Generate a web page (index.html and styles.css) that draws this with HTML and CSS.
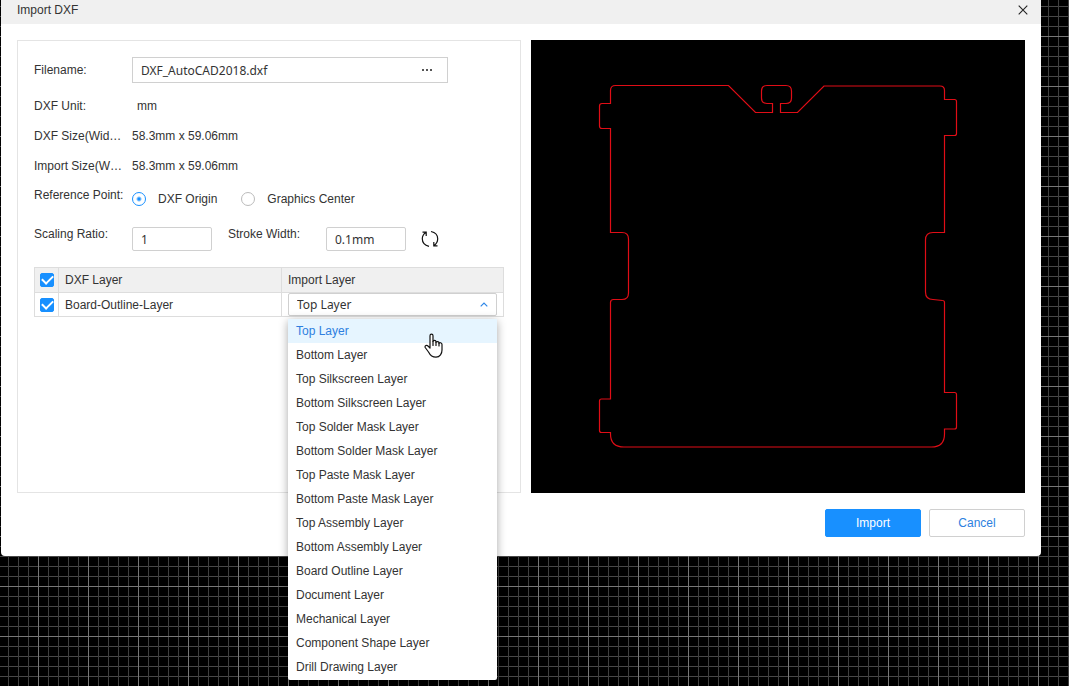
FILE: index.html
```html
<!DOCTYPE html>
<html lang="en">
<head>
<meta charset="utf-8">
<meta name="viewport" content="width=device-width, initial-scale=1">
<title>Import DXF</title>
<link rel="stylesheet" href="styles.css">
</head>
<body>
<main class="dialog" role="dialog" aria-labelledby="dialog-title">
  <header class="dialog-header">
    <h1 class="dialog-title" id="dialog-title">Import DXF</h1>
    <button class="close" type="button" aria-label="Close">
      <svg width="10" height="10" viewBox="0 0 10 10" fill="none" stroke="#222" stroke-width="1.1"><path d="M0.7 0.7 9.3 9.3M9.3 0.7 0.7 9.3"/></svg>
    </button>
  </header>

  <div class="dialog-body">
    <form class="settings" id="import-form">
      <div class="row row-file">
        <label class="label" for="filename">Filename:</label>
        <div class="file-box">
          <input class="file-input" id="filename" type="text" value="DXF_AutoCAD2018.dxf">
          <button class="browse" type="button" aria-label="Browse">
            <svg width="12" height="2" viewBox="0 0 12 2" fill="#555"><rect x="1" width="2" height="2"/><rect x="5" width="2" height="2"/><rect x="9" width="2" height="2"/></svg>
          </button>
        </div>
      </div>
      <div class="row row-info"><span class="label">DXF Unit:</span><span class="unit">mm</span></div>
      <div class="row row-info"><span class="label">DXF Size(Wid…</span><span>58.3mm x 59.06mm</span></div>
      <div class="row row-info"><span class="label">Import Size(W…</span><span>58.3mm x 59.06mm</span></div>
      <div class="row row-reference" role="radiogroup" aria-labelledby="reference-label">
        <span class="label label-top" id="reference-label">Reference Point:</span>
        <div class="controls">
          <label class="choice"><input class="radio" type="radio" name="reference" checked>DXF Origin</label>
          <label class="choice"><input class="radio" type="radio" name="reference">Graphics Center</label>
        </div>
      </div>
      <div class="row row-scale">
        <label class="label label-top" for="ratio">Scaling Ratio:</label>
        <div class="controls"><input class="number" id="ratio" type="text" value="1"></div>
        <label class="label label-top label-second" for="stroke">Stroke Width:</label>
        <div class="controls">
          <input class="number" id="stroke" type="text" value="0.1mm">
          <button class="refresh" type="button" aria-label="Refresh">
            <svg width="18" height="18" viewBox="0 0 18 18" fill="none" stroke="#111" stroke-width="1.2"><path d="M8 16.300C3.800 15.300 1.300 12.400 1.300 8.800 1.300 6 2.700 3.700 4.900 2.400M1.500 2.200H5.200V6M10 1.500C14.200 2.400 16.700 5.300 16.700 8.800 16.700 11.700 15.300 14 13.100 15.400M16.500 15.800H12.800V12"/></svg>
          </button>
        </div>
      </div>

      <table class="layers">
        <thead>
          <tr>
            <th class="cell-check"><input class="check" type="checkbox" aria-label="Select all layers" checked></th>
            <th class="cell-name">DXF Layer</th>
            <th>Import Layer</th>
          </tr>
        </thead>
        <tbody>
          <tr>
            <td class="cell-check"><input class="check" type="checkbox" aria-label="Board-Outline-Layer" checked></td>
            <td class="cell-name">Board-Outline-Layer</td>
            <td class="cell-select">
              <div class="picker">
                <select class="select" aria-label="Import Layer"><option>Top Layer</option></select>
                <svg class="chevron" width="8" height="5" viewBox="0 0 8 5" fill="none" stroke="#2d86e8" stroke-width="1.2"><path d="M0.700 4.300 4 1 7.300 4.300"/></svg>
                <ul class="menu" role="listbox" aria-label="Import Layer">
                  <li class="option option-active" role="option" aria-selected="true">Top Layer
                    <svg class="pointer" width="20" height="26" viewBox="0 0 20 26" fill="#fff" stroke="#111" stroke-width="1.200" stroke-linejoin="round" stroke-linecap="round"><path d="M6 15V2.700C6 .7 9 .7 9 2.700V8.500C9 7 12 7 12 8.800V9.500C12 8.200 15 8.200 15 10V10.500C15 9.300 18 9.300 18 11.500V17C18 20.500 16 24.200 12 24.200 7.500 24.200 6 22 4.500 19L1.200 14.500C.5 12.700 2.700 11.500 4 13Z"/><path d="M9 8.500V12.500M12 9.500V12.500M15 10.500V13" fill="none"/></svg>
                  </li>
                  <li class="option" role="option">Bottom Layer</li>
                  <li class="option" role="option">Top Silkscreen Layer</li>
                  <li class="option" role="option">Bottom Silkscreen Layer</li>
                  <li class="option" role="option">Top Solder Mask Layer</li>
                  <li class="option" role="option">Bottom Solder Mask Layer</li>
                  <li class="option" role="option">Top Paste Mask Layer</li>
                  <li class="option" role="option">Bottom Paste Mask Layer</li>
                  <li class="option" role="option">Top Assembly Layer</li>
                  <li class="option" role="option">Bottom Assembly Layer</li>
                  <li class="option" role="option">Board Outline Layer</li>
                  <li class="option" role="option">Document Layer</li>
                  <li class="option" role="option">Mechanical Layer</li>
                  <li class="option" role="option">Component Shape Layer</li>
                  <li class="option" role="option">Drill Drawing Layer</li>
                </ul>
              </div>
            </td>
          </tr>
        </tbody>
      </table>
    </form>

    <svg class="preview" viewBox="531 40 494 453" role="img" aria-label="Board outline preview">
      <path class="outline" d="M615.500 85.500H728.500L755.500 112.500H772.500V103.500H767Q761.500 103.500 761.500 98V91Q761.500 85.500 767 85.500H786Q791.500 85.500 791.500 91V98Q791.500 103.500 786 103.500H780.500V112.500H797.500L824 86H940Q944.500 86 944.500 90.500V99.500H954.500Q956.500 99.500 956.500 101.500V133.500Q956.500 135.500 954.500 135.500H944.500V232.500H933Q925.500 232.500 925.500 240V292Q925.500 299.500 933 299.500L942.500 300.500Q944.500 300.500 944.500 302.500V392.500H954.500Q956.500 392.500 956.500 394.500V427Q956.500 429 954.500 429H944.500V434Q944.500 447 931.500 447H624Q610.500 447 610.500 434V432.500H601.500Q599.500 432.500 599.500 430.500V401Q599.500 399 601.500 399H610.500V302.500Q610.500 299.500 613.500 299.500H622Q628.500 299.500 628.500 293V239Q628.500 232.500 622 232.500H610.500V128.500H602Q599.500 128.500 599.500 126V106Q599.500 103.500 602 103.500H610.500V90.500Q610.500 85.500 615.500 85.500Z"/>
    </svg>
  </div>

  <footer class="dialog-footer">
    <button class="button button-primary" type="submit" form="import-form">Import</button>
    <button class="button" type="button">Cancel</button>
  </footer>
</main>
</body>
</html>
```
FILE: styles.css
```css
* {
  box-sizing: border-box;
}

body {
  margin: 0;
  min-height: 100vh;
  color: #333;
  font: 12px/24px "Liberation Sans", Arial, sans-serif;
  background-color: #000;
  background-image:
    linear-gradient(90deg, #777 1px, transparent 1px),
    linear-gradient(#777 1px, transparent 1px),
    linear-gradient(90deg, #404040 1px, transparent 1px),
    linear-gradient(#484848 1px, transparent 1px);
  background-size: 50px 50px, 50px 50px, 10px 10px, 10px 10px;
  background-position: 38px 0, 0 36px, 8px 0, 0 6px;
}

button,
input,
select {
  margin: 0;
  color: inherit;
  font: inherit;
}

button {
  padding: 0;
  border: 0;
  background: none;
}

svg {
  display: block;
}

.dialog {
  margin: 0 28px 0 1px;
  border-radius: 0 0 4px 4px;
  background: #fff;
}

.dialog-header {
  display: flex;
  justify-content: space-between;
  height: 24px;
  padding: 0 13px 4px 16px;
  background: #f0f0f0;
}

.dialog-title {
  margin: 0;
  font-size: 12px;
  font-weight: 400;
  line-height: 20px;
}

.close {
  display: grid;
  place-items: center;
  width: 10px;
  height: 20px;
}

.dialog-body {
  display: grid;
  grid-template-columns: 504fr 494fr;
  gap: 10px;
  padding: 16px 16px 0;
}

.settings {
  padding: 16px;
  border: 1px solid #e4e4e4;
}

.row {
  display: flex;
  align-items: center;
}

.row-file {
  margin-bottom: 8px;
}

.row-info {
  height: 30px;
}

.row-reference {
  align-items: flex-start;
}

.row-scale {
  align-items: flex-start;
  margin: 3px 0 9px;
}

.label {
  flex: none;
  width: 98px;
  white-space: nowrap;
}

.label-top {
  line-height: 28px;
}

.label-second {
  margin-left: 16px;
}

.unit {
  padding-left: 5px;
}

.file-box {
  display: flex;
  width: 316px;
  height: 26px;
  border: 1px solid #d0d0d0;
}

.file-input {
  flex: 1;
  min-width: 0;
  padding: 2px 8px 0;
  border: 0;
  outline: 0;
  background: none;
  font-family: "Noto Sans", sans-serif;
}

.browse {
  display: grid;
  place-items: center;
  width: 40px;
}

.controls {
  display: flex;
  align-items: center;
  height: 36px;
}

.row-scale .controls {
  height: 38px;
}

.choice {
  display: flex;
  align-items: center;
  gap: 12px;
  margin-right: 24px;
}

.radio {
  appearance: none;
  width: 14px;
  height: 14px;
  border: 1px solid #bbb;
  border-radius: 50%;
}

.radio:checked {
  border-color: #1890ff;
  background: radial-gradient(circle, #1890ff 1px, transparent 3px);
}

.number {
  width: 80px;
  height: 24px;
  padding: 1px 8px 0;
  border: 1px solid #d0d0d0;
  border-radius: 2px;
  outline: 0;
  font-family: "Noto Sans", sans-serif;
}

.refresh {
  margin-left: 15px;
}

.layers {
  width: 100%;
  border-collapse: collapse;
  table-layout: fixed;
}

.layers th,
.layers td {
  height: 25px;
  padding: 0 6px;
  border: 1px solid #ddd;
  font-weight: 400;
  text-align: left;
}

.layers th {
  background: #f0f0f0;
}

.layers .cell-check {
  width: 24px;
  padding: 0 5px;
}

.layers .cell-name {
  width: 223px;
}

.layers td {
  height: 24px;
  line-height: 22px;
}

.check {
  appearance: none;
  display: grid;
  place-items: center;
  width: 14px;
  height: 14px;
  border: 1px solid #bbb;
  border-radius: 2px;
}

.check:checked {
  border-color: #1890ff;
  background: #1890ff;
}

.check:checked::before {
  content: "";
  width: 9px;
  height: 5px;
  margin-bottom: 3px;
  border: solid #fff;
  border-width: 0 0 2px 2px;
  transform: rotate(-45deg);
}

.picker {
  position: relative;
}

.select {
  display: block;
  appearance: none;
  width: 100%;
  height: 23px;
  padding: 0 8px;
  border: 1px solid #d0d0d0;
  border-radius: 2px;
  outline: 0;
  background: #fff;
  font-family: "Noto Sans", sans-serif;
}

.chevron {
  position: absolute;
  top: 9px;
  right: 9px;
}

.menu {
  position: absolute;
  z-index: 1;
  top: 100%;
  right: 0;
  left: 0;
  margin: 3px 0 0;
  padding: 0 0 1px;
  border-radius: 2px;
  background: #fff;
  box-shadow: 0 2px 10px rgba(0, 0, 0, 0.35);
  line-height: 24px;
  list-style: none;
}

.option {
  position: relative;
  padding: 0 8px;
}

.option-active {
  background: #e6f5ff;
  color: #2d7fe0;
}

.pointer {
  position: absolute;
  z-index: 1;
  top: 14px;
  right: 53px;
}

.preview {
  width: 100%;
  background: #000;
}

.outline {
  fill: none;
  stroke: #e00d16;
  stroke-width: 1.2;
}

.dialog-footer {
  display: flex;
  justify-content: flex-end;
  gap: 8px;
  padding: 16px 16px 19px;
}

.button {
  width: 96px;
  height: 28px;
  border: 1px solid #d0d0d0;
  border-radius: 2px;
  color: #2d7fe0;
}

.button-primary {
  border-color: #1890ff;
  background: #1890ff;
  color: #fff;
}
```
